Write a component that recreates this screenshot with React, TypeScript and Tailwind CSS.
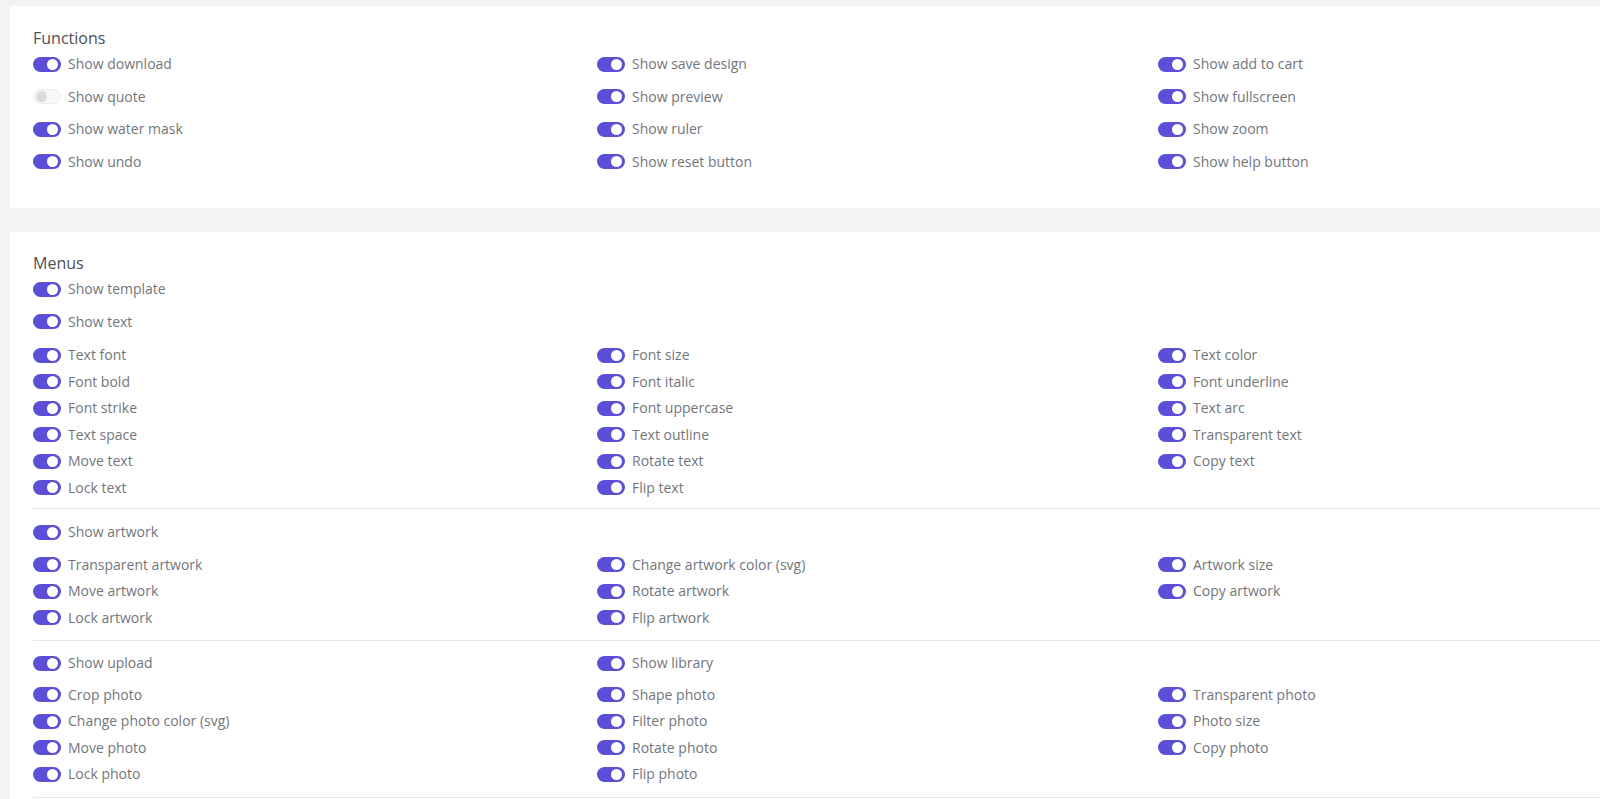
import { useState } from "react";

type Item = { key: string; label: string };

const functions: Item[] = [
  { key: "download", label: "Show download" },
  { key: "saveDesign", label: "Show save design" },
  { key: "addToCart", label: "Show add to cart" },
  { key: "quote", label: "Show quote" },
  { key: "preview", label: "Show preview" },
  { key: "fullscreen", label: "Show fullscreen" },
  { key: "waterMask", label: "Show water mask" },
  { key: "ruler", label: "Show ruler" },
  { key: "zoom", label: "Show zoom" },
  { key: "undo", label: "Show undo" },
  { key: "reset", label: "Show reset button" },
  { key: "help", label: "Show help button" },
];

const textItems: Item[] = [
  { key: "textFont", label: "Text font" },
  { key: "fontSize", label: "Font size" },
  { key: "textColor", label: "Text color" },
  { key: "fontBold", label: "Font bold" },
  { key: "fontItalic", label: "Font italic" },
  { key: "fontUnderline", label: "Font underline" },
  { key: "fontStrike", label: "Font strike" },
  { key: "fontUppercase", label: "Font uppercase" },
  { key: "textArc", label: "Text arc" },
  { key: "textSpace", label: "Text space" },
  { key: "textOutline", label: "Text outline" },
  { key: "transparentText", label: "Transparent text" },
  { key: "moveText", label: "Move text" },
  { key: "rotateText", label: "Rotate text" },
  { key: "copyText", label: "Copy text" },
  { key: "lockText", label: "Lock text" },
  { key: "flipText", label: "Flip text" },
];

const artworkItems: Item[] = [
  { key: "transparentArtwork", label: "Transparent artwork" },
  { key: "artworkColor", label: "Change artwork color (svg)" },
  { key: "artworkSize", label: "Artwork size" },
  { key: "moveArtwork", label: "Move artwork" },
  { key: "rotateArtwork", label: "Rotate artwork" },
  { key: "copyArtwork", label: "Copy artwork" },
  { key: "lockArtwork", label: "Lock artwork" },
  { key: "flipArtwork", label: "Flip artwork" },
];

const photoItems: Item[] = [
  { key: "cropPhoto", label: "Crop photo" },
  { key: "shapePhoto", label: "Shape photo" },
  { key: "transparentPhoto", label: "Transparent photo" },
  { key: "photoColor", label: "Change photo color (svg)" },
  { key: "filterPhoto", label: "Filter photo" },
  { key: "photoSize", label: "Photo size" },
  { key: "movePhoto", label: "Move photo" },
  { key: "rotatePhoto", label: "Rotate photo" },
  { key: "copyPhoto", label: "Copy photo" },
  { key: "lockPhoto", label: "Lock photo" },
  { key: "flipPhoto", label: "Flip photo" },
];

function Toggle({ on, onChange }: { on: boolean; onChange: () => void }) {
  return (
    <button
      type="button"
      role="switch"
      aria-checked={on}
      onClick={onChange}
      className={
        on
          ? "relative h-[15px] w-[28px] shrink-0 rounded-full bg-[#5b4fd8]"
          : "relative h-[15px] w-[28px] shrink-0 rounded-full border border-[#ececec] bg-[#f7f7f7]"
      }
    >
      <span
        className={
          on
            ? "absolute right-[3px] top-[2px] h-[11px] w-[11px] rounded-full bg-white"
            : "absolute left-[2px] top-[1px] h-[11px] w-[11px] rounded-full bg-[#dcdcdc]"
        }
      />
    </button>
  );
}

function Row({
  item,
  on,
  onToggle,
  tall,
}: {
  item: Item;
  on: boolean;
  onToggle: (k: string) => void;
  tall?: boolean;
}) {
  return (
    <div className={tall ? "flex h-[32.5px] items-center gap-[7px]" : "flex h-[26.5px] items-center gap-[7px]"}>
      <Toggle on={on} onChange={() => onToggle(item.key)} />
      <span className="text-[14px] leading-5 text-[#72767b]">{item.label}</span>
    </div>
  );
}

function Grid({
  items,
  state,
  onToggle,
  tall,
  className = "",
}: {
  items: Item[];
  state: Record<string, boolean>;
  onToggle: (k: string) => void;
  tall?: boolean;
  className?: string;
}) {
  return (
    <div className={"grid grid-cols-[564px_561px_564px] " + className}>
      {items.map((it) => (
        <Row key={it.key} item={it} on={state[it.key] ?? true} onToggle={onToggle} tall={tall} />
      ))}
    </div>
  );
}

export default function App() {
  const [state, setState] = useState<Record<string, boolean>>({ quote: false });
  const toggle = (k: string) => setState((s) => ({ ...s, [k]: !(s[k] ?? true) }));

  return (
    <div
      className="h-[799px] w-full overflow-hidden bg-[#f2f3f4] pl-[10px] pt-[6px]"
      style={{ fontFamily: '"Open Sans", "Liberation Sans", sans-serif' }}
    >
      <div className="w-[1780px]">
        <section className="bg-white pb-[30px] pl-[23px] pt-[22px]">
          <h2 className="text-[16px] leading-5 text-[#4d5055]">Functions</h2>
          <Grid items={functions} state={state} onToggle={toggle} tall />
        </section>

        <section className="mt-[24px] bg-white pl-[23px] pt-[21px] pb-[20px]">
          <h2 className="text-[16px] leading-5 text-[#4d5055]">Menus</h2>
          <Row item={{ key: "template", label: "Show template" }} on={state.template ?? true} onToggle={toggle} tall />
          <Row item={{ key: "text", label: "Show text" }} on={state.text ?? true} onToggle={toggle} tall />
          <Grid items={textItems} state={state} onToggle={toggle} className="mt-[4px]" />

          <div className="mt-[7px] border-t border-[#e6e7e9]" />
          <div className="mt-[7px]">
            <Row item={{ key: "artwork", label: "Show artwork" }} on={state.artwork ?? true} onToggle={toggle} tall />
          </div>
          <Grid items={artworkItems} state={state} onToggle={toggle} className="mt-[3px]" />

          <div className="mt-[9px] border-t border-[#e6e7e9]" />
          <div className="mt-[6px] grid grid-cols-[564px_561px_564px]">
            <Row item={{ key: "upload", label: "Show upload" }} on={state.upload ?? true} onToggle={toggle} tall />
            <Row item={{ key: "library", label: "Show library" }} on={state.library ?? true} onToggle={toggle} tall />
          </div>
          <Grid items={photoItems} state={state} onToggle={toggle} className="mt-[2px]" />
          <div className="mt-[9px] border-t border-[#e6e7e9]" />
        </section>
      </div>
    </div>
  );
}
